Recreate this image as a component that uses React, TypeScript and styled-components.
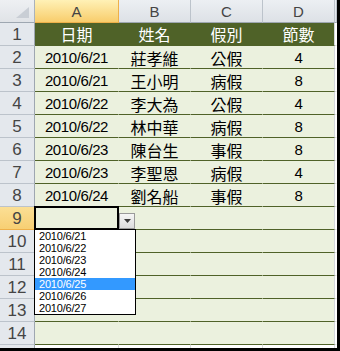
import React from "react";
import styled, { createGlobalStyle, css } from "styled-components";

const GlobalStyle = createGlobalStyle`
  html, body {
    margin: 0;
    padding: 0;
    background: #ffffff;
  }
`;

const LATIN = `"Liberation Sans", Arial, sans-serif`;
const CJK = `"Liberation Sans", "Noto Sans CJK TC", sans-serif`;

const GREEN = "#4f6228";
const PALE = "#ebf1de";

const Frame = styled.div`
  width: 340px;
  height: 351px;
  box-sizing: border-box;
  border-right: 3px solid #000;
  border-bottom: 3px solid #000;
  overflow: hidden;
  background: #fff;
`;

const Sheet = styled.div`
  display: grid;
  grid-template-columns: 35px 84px 72px 72px 72px 1fr;
  grid-auto-rows: 23px;
  height: 348px;
  overflow: hidden;
`;

const baseCell = css`
  box-sizing: border-box;
  display: flex;
  align-items: center;
  justify-content: center;
  white-space: nowrap;
`;

const Corner = styled.div`
  ${baseCell};
  justify-content: flex-end;
  align-items: flex-end;
  padding: 0 4px 3px 0;
  background: linear-gradient(#eef0f3, #e0e3e7);
  border-right: 1px solid #aab2bb;
  border-bottom: 1px solid #9ea7b1;
`;

const ColHead = styled.div<{ $active?: boolean }>`
  ${baseCell};
  font-family: ${LATIN};
  font-size: 15px;
  color: #444;
  background: ${(p) =>
    p.$active ? "linear-gradient(#fff1b6, #f8cd6c)" : "linear-gradient(#eceff3, #dde1e6)"};
  border-right: 1px solid ${(p) => (p.$active ? "#eeb04a" : "#bcc3cb")};
  border-bottom: 1px solid ${(p) => (p.$active ? "#eeb04a" : "#9ea7b1")};
`;

const RowHead = styled.div<{ $active?: boolean }>`
  ${baseCell};
  font-family: ${LATIN};
  font-size: 17px;
  color: #454545;
  padding-top: 1px;
  background: ${(p) => (p.$active ? "linear-gradient(#fbdf95, #f7cf73)" : "#e4e8ed")};
  border-right: 1px solid ${(p) => (p.$active ? "#eeb04a" : "#9ea7b1")};
  border-bottom: 1px solid ${(p) => (p.$active ? "#eeb04a" : "#bcc3cb")};
`;

const HeadCell = styled.div<{ $last?: boolean }>`
  ${baseCell};
  font-family: ${CJK};
  font-size: 16px;
  color: #fff;
  background: ${GREEN};
  border-bottom: 1px solid ${GREEN};
  border-right: 1px solid ${(p) => (p.$last ? "#d4d8dc" : GREEN)};
`;

const DataCell = styled.div<{ $last?: boolean; $cjk?: boolean; $selected?: boolean }>`
  ${baseCell};
  font-family: ${(p) => (p.$cjk ? CJK : LATIN)};
  font-size: ${(p) => (p.$cjk ? "16px" : "15px")};
  letter-spacing: ${(p) => (p.$cjk ? "0" : "-0.4px")};
  color: #000;
  padding-top: 1px;
  background: ${PALE};
  border-bottom: 1px solid ${GREEN};
  border-right: 1px solid ${(p) => (p.$last ? "#d4d8dc" : PALE)};
  ${(p) =>
    p.$selected &&
    css`
      position: relative;
      z-index: 5;
      &::after {
        content: "";
        position: absolute;
        top: -1px;
        left: -1px;
        right: -1px;
        bottom: -1px;
        border: 2px solid #000;
        pointer-events: none;
      }
    `}
`;

const BlankCell = styled.div<{ $lines?: boolean }>`
  ${baseCell};
  background: #fff;
  border-bottom: 1px solid #dadcdd;
  border-right: 1px solid ${(p) => (p.$lines ? "#dadcdd" : "#fff")};
`;

const ArrowButton = styled.div`
  position: absolute;
  left: 84px;
  top: 6px;
  width: 16px;
  height: 16px;
  box-sizing: border-box;
  border: 1px solid #9a9a9a;
  background: linear-gradient(#f6f6f6, #dcdcdc);
  display: flex;
  align-items: center;
  justify-content: center;
  z-index: 6;
`;

const ListBox = styled.div`
  position: absolute;
  left: -1px;
  top: 22px;
  width: 102px;
  box-sizing: border-box;
  border: 1px solid #000;
  background: #fff;
  z-index: 6;
`;

const ListItem = styled.div<{ $hl?: boolean }>`
  height: 12px;
  line-height: 12px;
  padding-left: 4px;
  font-family: ${LATIN};
  font-size: 11px;
  letter-spacing: -0.2px;
  text-align: left;
  color: ${(p) => (p.$hl ? "#fff" : "#000")};
  background: ${(p) => (p.$hl ? "#3399ff" : "#fff")};
`;

const cols = ["A", "B", "C", "D"];
const headers = ["日期", "姓名", "假別", "節數"];
const rows = [
  ["2010/6/21", "莊孝維", "公假", "4"],
  ["2010/6/21", "王小明", "病假", "8"],
  ["2010/6/22", "李大為", "公假", "4"],
  ["2010/6/22", "林中華", "病假", "8"],
  ["2010/6/23", "陳台生", "事假", "8"],
  ["2010/6/23", "李聖恩", "病假", "4"],
  ["2010/6/24", "劉名船", "事假", "8"],
];
const options = [
  "2010/6/21",
  "2010/6/22",
  "2010/6/23",
  "2010/6/24",
  "2010/6/25",
  "2010/6/26",
  "2010/6/27",
];

const App = () => {
  const emptyRows = [9, 10, 11, 12, 13, 14];

  return (
    <>
      <GlobalStyle />
      <Frame>
        <Sheet>
          <Corner>
            <svg width="14" height="12" viewBox="0 0 14 12">
              <polygon points="13,0 13,11 0,11" fill="#c9ced5" />
            </svg>
          </Corner>
          {cols.map((c) => (
            <ColHead key={c} $active={c === "A"}>
              {c}
            </ColHead>
          ))}
          <ColHead />

          <RowHead>1</RowHead>
          {headers.map((h, i) => (
            <HeadCell key={h} $last={i === 3}>
              {h}
            </HeadCell>
          ))}
          <BlankCell />

          {rows.map((r, ri) => (
            <React.Fragment key={ri}>
              <RowHead>{ri + 2}</RowHead>
              {r.map((v, ci) => (
                <DataCell key={ci} $cjk={ci === 1 || ci === 2} $last={ci === 3}>
                  {v}
                </DataCell>
              ))}
              <BlankCell />
            </React.Fragment>
          ))}

          {emptyRows.map((n) => (
            <React.Fragment key={n}>
              <RowHead $active={n === 9}>{n}</RowHead>
              {cols.map((c, ci) =>
                n === 9 && ci === 0 ? (
                  <DataCell key={c} $selected>
                    <ArrowButton>
                      <svg width="7" height="4" viewBox="0 0 7 4">
                        <polygon points="0,0 7,0 3.5,4" fill="#3c3c3c" />
                      </svg>
                    </ArrowButton>
                    <ListBox>
                      {options.map((o) => (
                        <ListItem key={o} $hl={o === "2010/6/25"}>
                          {o}
                        </ListItem>
                      ))}
                    </ListBox>
                  </DataCell>
                ) : (
                  <DataCell key={c} $last={ci === 3} />
                )
              )}
              <BlankCell />
            </React.Fragment>
          ))}

          {/* row 15 only peeks in under row 14 */}
          <RowHead />
          {cols.map((c) => (
            <BlankCell key={c} $lines />
          ))}
          <BlankCell />
        </Sheet>
      </Frame>
    </>
  );
};

export default App;
